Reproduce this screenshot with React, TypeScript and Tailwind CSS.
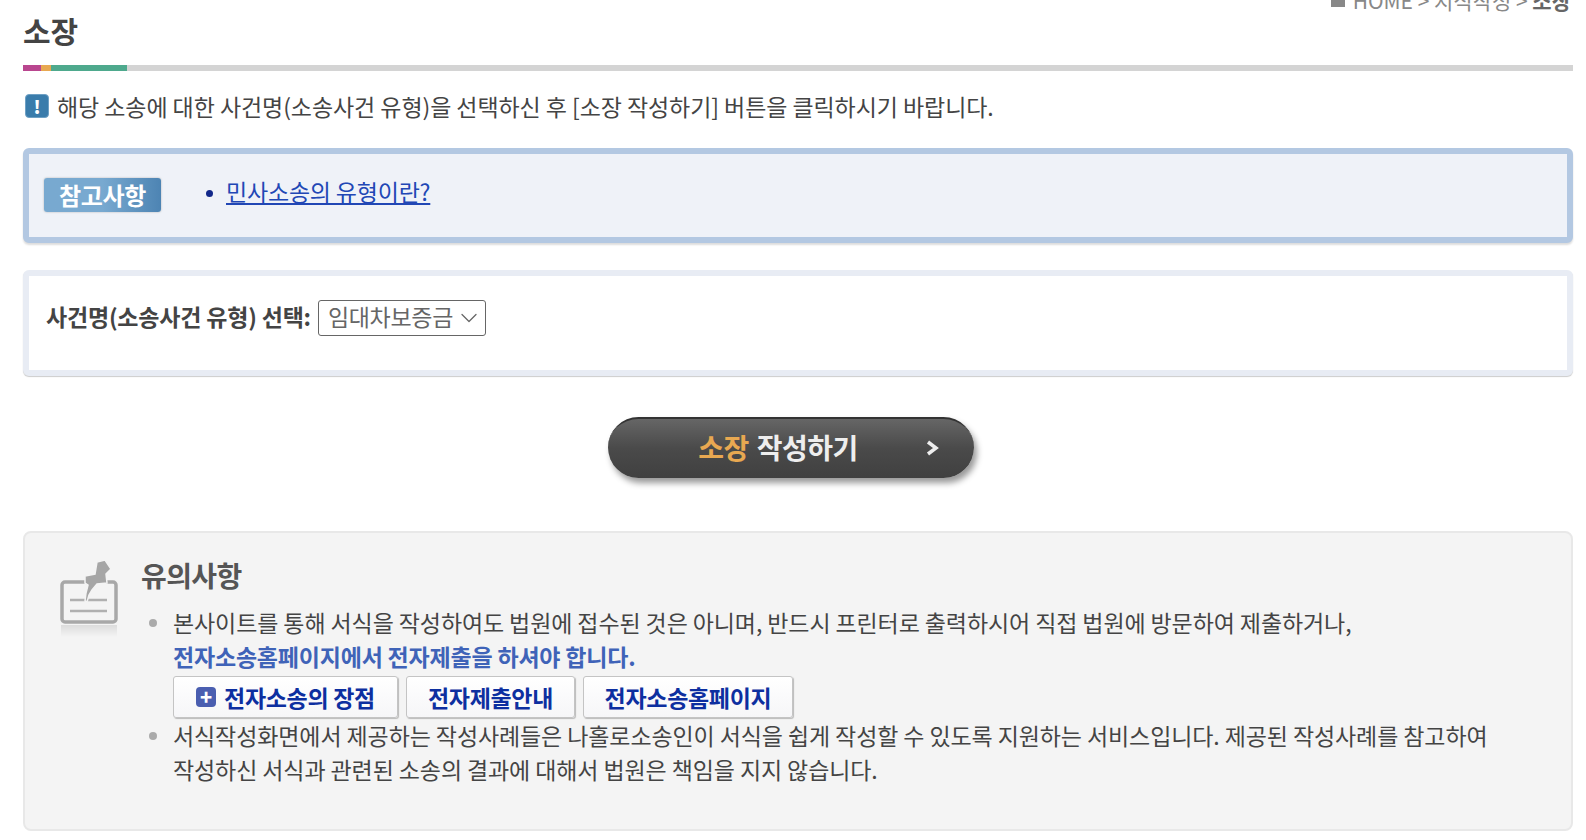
import React from 'react';
import { ChevronDown } from 'lucide-react';

const font = "[font-family:'Noto_Sans_CJK_KR','Liberation_Sans',sans-serif]";

const PinIcon = () => (
  <svg width="64" height="84" viewBox="0 0 64 84" className="shrink-0 -ml-[2px] mt-[2px]">
    <defs>
      <linearGradient id="shade" x1="0" y1="0" x2="0" y2="1">
        <stop offset="0" stopColor="#dcdcdc" />
        <stop offset="1" stopColor="#f4f4f4" />
      </linearGradient>
    </defs>
    <rect x="3" y="23" width="54" height="40" rx="3" fill="none" stroke="#a8a8a8" strokeWidth="3.5" />
    <path d="M11 41h37M11 52h37" stroke="#b0b0b0" strokeWidth="2.5" />
    <path d="M26 17l10-2 2-12 8-2 6 9-5 5 1 9-10 1-5 6-3 5-2 7-2-1 1-8 2-8-3-2z" fill="#a6a6a6" stroke="#f4f4f4" strokeWidth="1.5" />
    <rect x="2" y="66" width="56" height="12" fill="url(#shade)" />
  </svg>
);

const LinkButton = ({ children, className }: { children: React.ReactNode; className: string }) => (
  <button className={`h-[42px] flex items-center justify-center bg-gradient-to-b from-white to-[#f6f6f8] border border-[#c4c4c4] rounded-[3px] shadow-[1px_1px_1px_#bbb] text-[#0d2fa0] text-[23px] font-bold tracking-[-0.3px] ${className}`}>
    {children}
  </button>
);

export default function App() {
  return (
    <div className={`h-[840px] overflow-hidden bg-white pl-[23px] pr-[13px] text-[#444] ${font}`}>
      <div className="flex justify-end h-[1px] text-[21px] text-[#888] leading-[20px] pr-[2px]">
        <div className="flex items-center gap-[8px] h-[20px] -mt-[10px]">
          <span className="w-[14px] h-[10px] bg-[#888] mt-[3px]" />
          <span>HOME &gt; 지식작성 &gt; <b className="text-[#666]">소장</b></span>
        </div>
      </div>
      <h1 className="mt-[8px] h-[44px] text-[30px] font-bold leading-[42px] text-[#444]">소장</h1>

      <div className="mt-[12px] h-[6px] bg-[#d4d4d4] flex">
        <div className="w-[18px] bg-[#b9468f]" />
        <div className="w-[10px] bg-[#e8a851]" />
        <div className="w-[76px] bg-[#4ea98d]" />
      </div>

      <div className="mt-[21px] h-[28px] flex items-center gap-[8px]">
        <span className="ml-[2px] w-[24px] h-[24px] rounded-[4px] border border-[#6ea0c4] bg-[#3a7cab] text-white text-[18px] font-black flex items-center justify-center">!</span>
        <p className="text-[23px] leading-[28px] tracking-[-0.07px] text-[#444]">해당 소송에 대한 사건명(소송사건 유형)을 선택하신 후 [소장 작성하기] 버튼을 클릭하시기 바랍니다.</p>
      </div>

      <div className="mt-[28px] h-[95px] border-[6px] border-[#b3c8e2] rounded-[6px] bg-[#eff2f8] shadow-[0_2px_2px_#ddd] flex items-center pl-[15px] pb-[2px]">
        <span className="w-[117px] h-[34px] rounded-[3px] bg-gradient-to-r from-[#78a9d0] via-[#78a9d0] to-[#4d84b3] text-white text-[24px] font-bold flex items-center justify-center tracking-[-0.3px] shadow-[0_0_2px_#aaa]">참고사항</span>
        <span className="ml-[45px] mb-[2px] w-[7px] h-[7px] rounded-full bg-[#12288a]" />
        <a href="#" className="ml-[13px] mb-[8px] text-[23px] leading-[30px] tracking-[-0.2px] text-[#2147b5] underline">민사소송의 유형이란?</a>
      </div>

      <div className="mt-[27px] h-[106px] border-[6px] border-[#e8ecf4] rounded-[6px] bg-white shadow-[0_1px_1px_#ccc] flex items-start pl-[17px] pt-[22px]">
        <label className="text-[23px] leading-[36px] font-bold tracking-[-0.2px] text-[#444]">사건명(소송사건 유형) 선택:</label>
        <div className="ml-[7px] mt-[2px] w-[168px] h-[36px] border border-[#666] rounded-[3px] flex items-center pl-[9px] pb-[3px] text-[23px] tracking-[-0.3px] text-[#666]">
          임대차보증금
          <ChevronDown className="w-[28px] h-[28px] ml-[2px] mt-[3px] shrink-0" strokeWidth={1.1} />
        </div>
      </div>

      <div className="mt-[41px] flex justify-center pr-[14px]">
        <button className="relative w-[366px] h-[61px] rounded-full bg-gradient-to-b from-[#666] via-[#4a4a4a] to-[#404040] border-t-2 border-[#333] shadow-[3px_5px_6px_#999] text-[28px] font-bold tracking-[-0.5px] text-[#eee] flex items-center justify-center pr-[26px] pb-[4px]">
          <span className="text-[#e8a851] mr-[8px]">소장</span>작성하기
          <svg width="14" height="16" viewBox="0 0 14 16" className="absolute right-[34px] top-[21px]">
            <path d="M2 2l8 6-8 6" fill="none" stroke="#eee" strokeWidth="3.5" />
          </svg>
        </button>
      </div>

      <div className="mt-[53px] h-[300px] border-2 border-[#e8e8e8] rounded-[8px] bg-[#f4f4f4] flex pl-[36px] pt-[24px]">
        <PinIcon />
        <div className="ml-[18px] flex-1">
          <h2 className="text-[28px] leading-[36px] font-bold tracking-[-0.6px] text-[#555]">유의사항</h2>
          <ul className="mt-[12px] -ml-[0px] text-[23px] leading-[34px] tracking-[-0.1px] text-[#444]">
            <li className="flex">
              <span className="mt-[14px] ml-[8px] mr-[6px] w-[8px] h-[8px] rounded-full bg-[#aaa] shrink-0" />
              <div className="ml-[10px]">
                <p>본사이트를 통해 서식을 작성하여도 법원에 접수된 것은 아니며, 반드시 프린터로 출력하시어 직접 법원에 방문하여 제출하거나,</p>
                <p className="font-bold tracking-[-0.2px] text-[#3f63b8]">전자소송홈페이지에서 전자제출을 하셔야 합니다.</p>
                <div className="flex gap-[8px] mt-[3px]">
                  <LinkButton className="w-[225px]">
                    <span className="w-[20px] h-[20px] rounded-[4px] bg-[#4a5eb0] text-white text-[20px] font-black leading-[20px] mr-[8px] flex items-center justify-center">+</span>
                    전자소송의 장점
                  </LinkButton>
                  <LinkButton className="w-[169px]">전자제출안내</LinkButton>
                  <LinkButton className="w-[210px]">전자소송홈페이지</LinkButton>
                </div>
              </div>
            </li>
            <li className="flex">
              <span className="mt-[14px] ml-[8px] mr-[6px] w-[8px] h-[8px] rounded-full bg-[#aaa] shrink-0" />
              <p className="ml-[10px] w-[1340px]">서식작성화면에서 제공하는 작성사례들은 나홀로소송인이 서식을 쉽게 작성할 수 있도록 지원하는 서비스입니다. 제공된 작성사례를 참고하여 작성하신 서식과 관련된 소송의 결과에 대해서 법원은 책임을 지지 않습니다.</p>
            </li>
          </ul>
        </div>
      </div>
    </div>
  );
}
